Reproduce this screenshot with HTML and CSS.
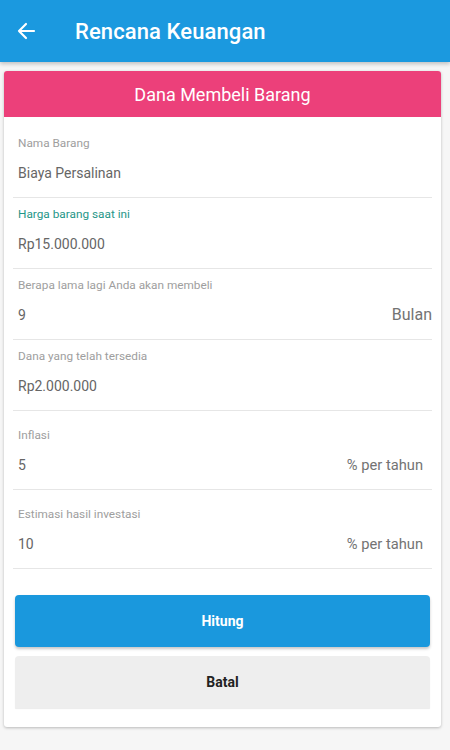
FILE: index.html
```html
<!DOCTYPE html>
<html lang="id">
<head>
<meta charset="utf-8">
<title>Rencana Keuangan</title>
<link rel="stylesheet" href="styles.css">
</head>
<body>
<header class="appbar">
  <svg class="back" width="20" height="20" viewBox="0 0 20 20" aria-hidden="true">
    <path d="M18 10H3M10 3L3 10L10 17" fill="none" stroke="#fff" stroke-width="2.2" stroke-linecap="round" stroke-linejoin="round"/>
  </svg>
  <h1 class="title">Rencana Keuangan</h1>
</header>
<main class="card">
  <div class="card-head">Dana Membeli Barang</div>
  <div class="fields">
    <div class="field first">
      <div class="label">Nama Barang</div>
      <div class="value">Biaya Persalinan</div>
    </div>
    <div class="field">
      <div class="label focus">Harga barang saat ini</div>
      <div class="value">Rp15.000.000</div>
    </div>
    <div class="field">
      <div class="label">Berapa lama lagi Anda akan membeli</div>
      <div class="value row"><span>9</span><span class="unit big">Bulan</span></div>
    </div>
    <div class="field">
      <div class="label">Dana yang telah tersedia</div>
      <div class="value">Rp2.000.000</div>
    </div>
    <div class="field tall">
      <div class="label">Inflasi</div>
      <div class="value row"><span>5</span><span class="unit">% per tahun</span></div>
    </div>
    <div class="field tall">
      <div class="label">Estimasi hasil investasi</div>
      <div class="value row"><span>10</span><span class="unit">% per tahun</span></div>
    </div>
  </div>
  <div class="actions">
    <button class="btn primary">Hitung</button>
    <button class="btn secondary">Batal</button>
  </div>
</main>
</body>
</html>
```
FILE: styles.css
```css
* { box-sizing: border-box; }
html, body { margin: 0; padding: 0; }
body {
  width: 450px;
  height: 750px;
  background: #f6f6f6;
  font-family: Roboto, "Noto Sans", "Liberation Sans", sans-serif;
  overflow: hidden;
}
.appbar {
  height: 62px;
  background: #1b99df;
  display: flex;
  align-items: center;
  padding-left: 16px;
  box-shadow: 0 2px 4px rgba(0,0,0,0.22);
  position: relative;
  z-index: 1;
}
.back { display: block; margin-top: -1px; }
.title {
  margin: 0 0 0 39px;
  color: #fff;
  font-size: 22px;
  font-weight: 500;
  letter-spacing: 0.1px;
}
.card {
  margin: 9px 9px 0 4px;
  background: #fff;
  border-radius: 3px;
  box-shadow: 0 1px 3px rgba(0,0,0,0.25);
  padding-bottom: 19px;
  overflow: hidden;
}
.card-head {
  height: 46px;
  background: #ec407a;
  color: #fff;
  font-size: 18px;
  display: flex;
  align-items: center;
  justify-content: center;
}
.fields { padding: 10px 9px 0 9px; }
.field {
  padding: 8px 5px 14px 5px;
  border-bottom: 1px solid #e6e6e6;
}
.field.tall { padding-top: 16px; }
.label {
  font-size: 11.8px;
  line-height: 16px;
  color: #9e9e9e;
}
.label.focus { color: #1f9688; }
.value {
  margin-top: 12px;
  font-size: 14px;
  line-height: 20px;
  color: #666666;
}
.row {
  display: flex;
  justify-content: space-between;
  align-items: center;
}
.unit { font-size: 14.7px; color: #737373; padding-right: 4px; }
.unit.big { font-size: 16px; padding-right: 0; margin-right: -5px; }
.actions {
  padding: 26px 11px 0 11px;
  display: flex;
  flex-direction: column;
  gap: 9px;
}
.btn {
  height: 52px;
  border: none;
  border-radius: 4px;
  font-family: Roboto, "Noto Sans", "Liberation Sans", sans-serif;
  font-size: 14px;
  font-weight: 700;
  width: 100%;
}
.primary {
  background: #1a98dd;
  color: #fff;
  box-shadow: 0 2px 3px rgba(0,0,0,0.22);
}
.secondary {
  background: #eeeeee;
  color: #222;
  border-radius: 4px 4px 0 0;
  box-shadow: 0 1px 1px rgba(0,0,0,0.08);
}
```
